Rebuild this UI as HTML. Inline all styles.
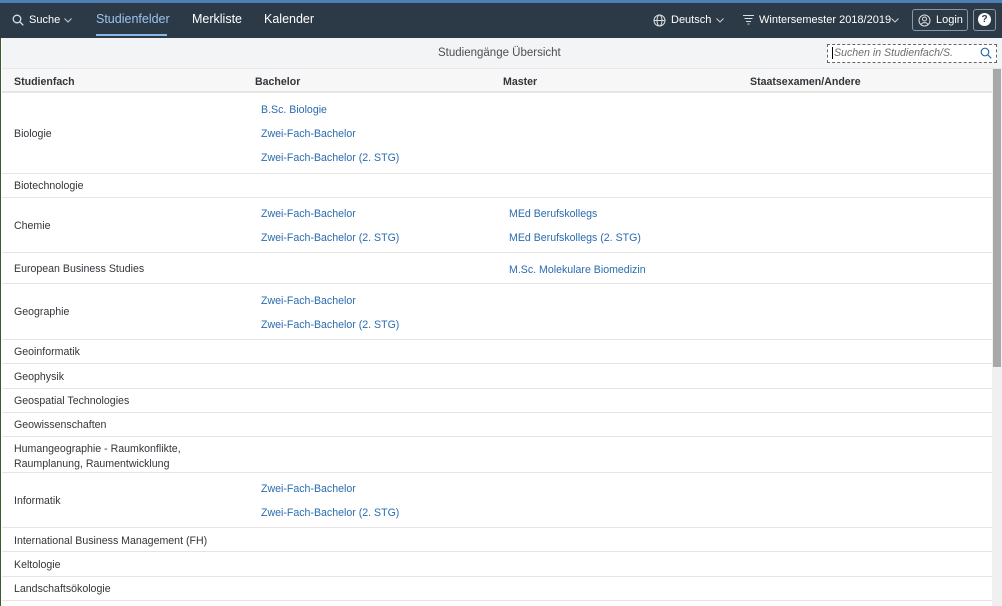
<!DOCTYPE html><html><head><meta charset="utf-8"><style>
*{margin:0;padding:0;box-sizing:border-box}
body{width:1002px;height:606px;overflow:hidden;background:#fff;font-family:"Liberation Sans",sans-serif;font-size:10.6px;color:#32363a;position:relative}
.a{position:absolute;white-space:nowrap}
.t{margin-top:1px}
.top{position:absolute;left:0;top:0;width:1002px;height:38px;background:#2c3a47;border-top:3px solid #4d7fb4}
.nav{color:#fff;font-size:12.5px}
.sub{position:absolute;left:2px;top:38px;width:1000px;height:31px;background:#f2f4f6;border-bottom:1px solid #e4e8ec}
.hd{position:absolute;left:2px;top:69px;width:990px;height:24px;background:#f7f7f7;border-bottom:2px solid #e5e5e5}
.hd2{font-weight:bold}
.row{position:absolute;left:2px;width:990px;border-bottom:1px solid #e5e5e5}
.l{color:#2a6cb0}
.sb{position:absolute;left:992px;top:69px;width:10px;height:537px;background:#f0f0f0}
.th{position:absolute;left:993px;top:69px;width:8px;height:298px;background:#a8a8a8}
</style></head><body>
<div class="a" style="left:0;top:0;width:1px;height:606px;background:#3c5a2c"></div>
<div class="top"></div>
<svg class="a" style="left:12px;top:14px" width="12" height="12" viewBox="0 0 12 12"><circle cx="5" cy="5" r="3.8" fill="none" stroke="#cfe0f0" stroke-width="1.3"/><path d="M8 8l3.3 3.3" stroke="#cfe0f0" stroke-width="1.3"/></svg>
<div class="a nav" style="left:29px;top:14px;font-size:11px">Suche</div>
<svg class="a" style="left:64px;top:18px" width="8" height="5"><path d="M0.5 0.5l3.5 3.5 3.5-3.5" fill="none" stroke="#ccc"/></svg>
<div class="a nav" style="left:96px;top:12px;color:#9cc4ec">Studienfelder</div>
<div class="a" style="left:96px;top:34px;width:71px;height:2px;background:#8ab8e6"></div>
<div class="a nav" style="left:192px;top:12px">Merkliste</div>
<div class="a nav" style="left:264px;top:12px">Kalender</div>
<svg class="a" style="left:653px;top:14px" width="13" height="13" viewBox="0 0 13 13" fill="none" stroke="#ddd" stroke-width="1"><circle cx="6.5" cy="6.5" r="5.5"/><ellipse cx="6.5" cy="6.5" rx="2.5" ry="5.5"/><path d="M1 6.5h11"/></svg>
<div class="a nav" style="left:671px;top:14px;font-size:11px">Deutsch</div>
<svg class="a" style="left:716px;top:18px" width="8" height="5"><path d="M0.5 0.5l3.5 3.5 3.5-3.5" fill="none" stroke="#ccc"/></svg>
<svg class="a" style="left:743px;top:14px" width="11" height="11" stroke="#ddd"><path d="M0 1.5h11M1.5 4.5h8M3 7.5h5M4.5 10h2"/></svg>
<div class="a nav" style="left:759px;top:14px;font-size:11px">Wintersemester 2018/2019</div>
<svg class="a" style="left:891px;top:18px" width="8" height="5"><path d="M0.5 0.5l3.5 3.5 3.5-3.5" fill="none" stroke="#ccc"/></svg>
<div class="a" style="left:912px;top:9px;width:56px;height:22px;border:1px solid #8a98a6;border-radius:3px"></div>
<svg class="a" style="left:918px;top:14px" width="13" height="13" viewBox="0 0 13 13" fill="none" stroke="#ddd"><circle cx="6.5" cy="6.5" r="5.5"/><circle cx="6.5" cy="5" r="2"/><path d="M3 10.5c1.5-2.5 5.5-2.5 7 0"/></svg>
<div class="a nav" style="left:936px;top:14px;font-size:11px">Login</div>
<div class="a" style="left:973px;top:9px;width:23px;height:22px;border:1px solid #8a98a6;border-radius:3px"></div>
<div class="a" style="left:978px;top:13px;width:13px;height:13px;border-radius:50%;background:#fff;color:#2c3a47;font-weight:bold;font-size:10px;text-align:center;line-height:13px">?</div>
<div class="sub"></div>
<div class="a" style="left:438px;top:47px;font-size:11.5px;color:#4a4f54">Studiengänge Übersicht</div>
<div class="a" style="left:827px;top:44px;width:170px;height:19px;border:1px dashed #666;background:#fff"></div>
<div class="a" style="left:832px;top:47px;font-style:italic;color:#6a6d70;font-size:10.6px;border-left:1px solid #000;padding-left:1px">Suchen in Studienfach/S.</div>
<svg class="a" style="left:980px;top:47px" width="12" height="12" viewBox="0 0 12 12"><circle cx="5" cy="5" r="3.8" fill="none" stroke="#2a6cb0" stroke-width="1.2"/><path d="M8 8l3.3 3.3" stroke="#2a6cb0" stroke-width="1.2"/></svg>
<div class="hd"></div>
<div class="a t hd2" style="left:14px;top:75px">Studienfach</div>
<div class="a t hd2" style="left:255px;top:75px">Bachelor</div>
<div class="a t hd2" style="left:503px;top:75px">Master</div>
<div class="a t hd2" style="left:750px;top:75px">Staatsexamen/Andere</div>

<div class="row" style="top:93px;height:81px"></div>
<div class="a t" style="left:14px;top:127px">Biologie</div>
<div class="a t l" style="left:261px;top:103px">B.Sc. Biologie</div>
<div class="a t l" style="left:261px;top:127px">Zwei-Fach-Bachelor</div>
<div class="a t l" style="left:261px;top:151px">Zwei-Fach-Bachelor (2. STG)</div>
<div class="row" style="top:174px;height:24px"></div>
<div class="a t" style="left:14px;top:179px">Biotechnologie</div>
<div class="row" style="top:198px;height:55px"></div>
<div class="a t" style="left:14px;top:219px">Chemie</div>
<div class="a t l" style="left:261px;top:207px">Zwei-Fach-Bachelor</div>
<div class="a t l" style="left:261px;top:231px">Zwei-Fach-Bachelor (2. STG)</div>
<div class="a t l" style="left:509px;top:207px">MEd Berufskollegs</div>
<div class="a t l" style="left:509px;top:231px">MEd Berufskollegs (2. STG)</div>
<div class="row" style="top:253px;height:31px"></div>
<div class="a t" style="left:14px;top:262px">European Business Studies</div>
<div class="a t l" style="left:509px;top:263px">M.Sc. Molekulare Biomedizin</div>
<div class="row" style="top:284px;height:56px"></div>
<div class="a t" style="left:14px;top:305px">Geographie</div>
<div class="a t l" style="left:261px;top:294px">Zwei-Fach-Bachelor</div>
<div class="a t l" style="left:261px;top:318px">Zwei-Fach-Bachelor (2. STG)</div>
<div class="row" style="top:340px;height:24px"></div>
<div class="a t" style="left:14px;top:345px">Geoinformatik</div>
<div class="row" style="top:364px;height:25px"></div>
<div class="a t" style="left:14px;top:370px">Geophysik</div>
<div class="row" style="top:389px;height:24px"></div>
<div class="a t" style="left:14px;top:394px">Geospatial Technologies</div>
<div class="row" style="top:413px;height:24px"></div>
<div class="a t" style="left:14px;top:418px">Geowissenschaften</div>
<div class="row" style="top:437px;height:36px"></div>
<div class="a t" style="left:14px;top:441px;line-height:15px">Humangeographie - Raumkonflikte,<br>Raumplanung, Raumentwicklung</div>
<div class="row" style="top:473px;height:55px"></div>
<div class="a t" style="left:14px;top:494px">Informatik</div>
<div class="a t l" style="left:261px;top:482px">Zwei-Fach-Bachelor</div>
<div class="a t l" style="left:261px;top:506px">Zwei-Fach-Bachelor (2. STG)</div>
<div class="row" style="top:528px;height:24px"></div>
<div class="a t" style="left:14px;top:534px">International Business Management (FH)</div>
<div class="row" style="top:552px;height:25px"></div>
<div class="a t" style="left:14px;top:558px">Keltologie</div>
<div class="row" style="top:577px;height:24px"></div>
<div class="a t" style="left:14px;top:582px">Landschaftsökologie</div>
<div class="sb"></div><div class="th"></div>
</body></html>
